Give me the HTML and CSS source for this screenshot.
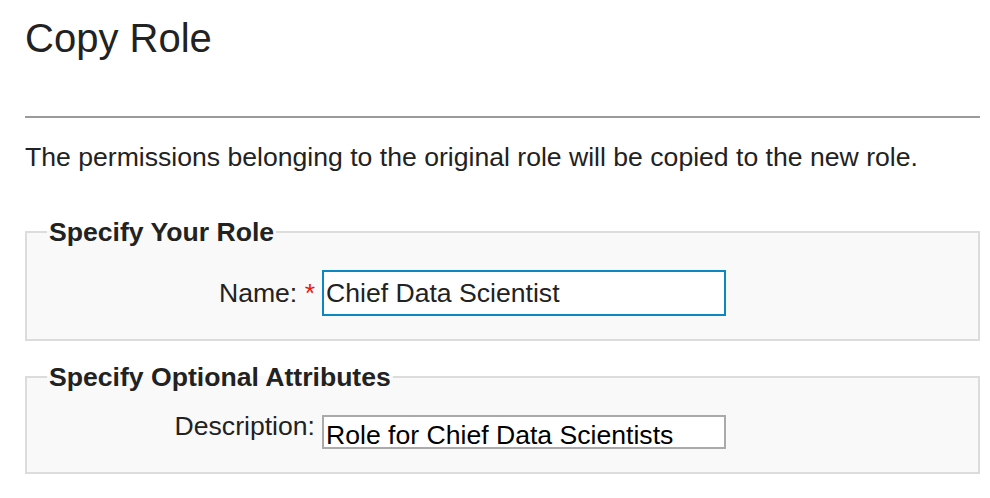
FILE: index.html
```html
<!DOCTYPE html>
<html lang="en">
<head>
<meta charset="utf-8">
<title>Copy Role</title>
<link rel="stylesheet" href="styles.css">
</head>
<body>
<div class="page">
  <h1 class="title">Copy Role</h1>
  <hr class="divider">
  <p class="intro">The permissions belonging to the original role will be copied to the new role.</p>

  <fieldset class="group group-role">
    <legend class="group-legend">Specify Your Role</legend>
    <div class="row row-name">
      <label class="row-label" for="name">Name: <span class="req">*</span></label>
      <input class="field field-focus" id="name" type="text" value="Chief Data Scientist">
    </div>
  </fieldset>

  <fieldset class="group group-attrs">
    <legend class="group-legend">Specify Optional Attributes</legend>
    <div class="row row-desc">
      <label class="row-label" for="desc">Description:</label>
      <input class="field field-plain" id="desc" type="text" value="Role for Chief Data Scientists">
    </div>
  </fieldset>
</div>
</body>
</html>
```

FILE: styles.css
```css
html, body {
  margin: 0;
  padding: 0;
  background: #ffffff;
}

body {
  font-family: "Liberation Sans", Arial, Helvetica, sans-serif;
  color: #222222;
  font-size: 26.6px;
}

.page {
  padding: 0 10px 0 25px;
}

.title {
  margin: 0;
  padding-top: 15px;
  font-size: 40px;
  line-height: 46px;
  font-weight: normal;
  color: #222222;
}

.divider {
  margin: 55px 0 0;
  border: none;
  height: 2px;
  background: #9a9a9a;
}

.intro {
  margin: 24px 0 0;
  line-height: 30px;
}

.group {
  margin: 0;
  padding: 0;
  border: 2px solid #dcdcdc;
  background: #f9f9f9;
  min-width: 0;
}

.group-role {
  margin-top: 45px;
  padding-bottom: 23px;
}

.group-attrs {
  margin-top: 21px;
  padding-bottom: 23px;
}

.group-legend {
  margin-left: 20px;
  padding: 0 2px;
  font-weight: bold;
  line-height: 30px;
  color: #222222;
}

.row {
  display: flex;
}

.row-name {
  align-items: center;
  padding-top: 23px;
}

.row-desc {
  align-items: flex-start;
  padding-top: 19px;
}

.row-label {
  box-sizing: border-box;
  width: 295px;
  padding-right: 7px;
  text-align: right;
  line-height: 30px;
  color: #222222;
}

.req {
  color: #e8160c;
}

.field {
  box-sizing: border-box;
  width: 404px;
  margin: 0;
  font-family: "Liberation Sans", Arial, Helvetica, sans-serif;
  font-size: 26.6px;
  background: #ffffff;
  outline: none;
  border-radius: 0;
}

.field-focus {
  height: 46px;
  padding: 0 2px;
  border: 2px solid #0a88bf;
  color: #222222;
}

.field-plain {
  height: 34px;
  margin-top: 4px;
  padding: 6px 2px 0;
  border: 2px solid #aaaaaa;
  color: #000000;
}
```
